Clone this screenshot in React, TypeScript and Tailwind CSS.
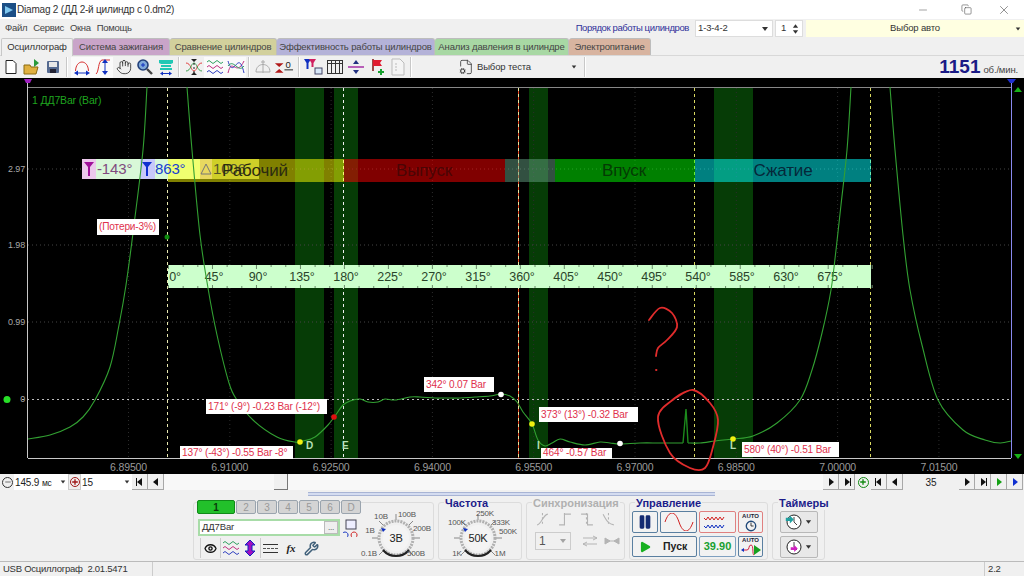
import React from 'react';
import { Hand, Minus, X, Copy, Pause, Play, Eye, Wrench, FileCog, Plus } from 'lucide-react';

// smooth path through measured points
const smooth = (pts: number[][]): string => {
  let d = `M${pts[0][0]} ${pts[0][1]}`;
  for (let i = 0; i < pts.length - 1; i++) {
    const p0 = pts[Math.max(i - 1, 0)];
    const p1 = pts[i];
    const p2 = pts[i + 1];
    const p3 = pts[Math.min(i + 2, pts.length - 1)];
    const k = 6;
    d += ` C${(p1[0] + (p2[0] - p0[0]) / k).toFixed(1)} ${(p1[1] + (p2[1] - p0[1]) / k).toFixed(1)} ${(p2[0] - (p3[0] - p1[0]) / k).toFixed(1)} ${(p2[1] - (p3[1] - p1[1]) / k).toFixed(1)} ${p2[0]} ${p2[1]}`;
  }
  return d;
};

const curveA = [[28, 439], [50, 435], [70, 427], [83, 417], [95, 400], [110, 367], [119, 325], [126, 285], [134, 225], [143, 150], [147, 87]];
const curveB = [[187, 87], [192, 150], [200, 235], [208, 288], [217, 335], [229, 383], [237, 400], [253, 420], [277, 437], [295, 442], [303, 441], [315, 437], [328, 425], [335, 416], [343, 405], [350, 401], [360, 399], [368, 402], [378, 402], [385, 399], [395, 400], [410, 397], [420, 397], [435, 398], [445, 398], [460, 398], [475, 397], [490, 396], [501, 394], [510, 396], [517, 402], [523, 412], [532, 424], [538, 440], [545, 446], [552, 443], [560, 439], [570, 442], [585, 445], [600, 442], [610, 443], [620, 444], [640, 443], [660, 443], [683, 443]];
const curveC = [[688, 443], [700, 443], [715, 441], [733, 439], [753, 436], [777, 423], [800, 400], [812, 370], [822, 333], [831, 290], [836, 250], [841, 205], [847, 150], [851, 87]];
const curveD = [[890, 87], [895, 150], [903, 235], [910, 290], [922, 345], [938, 400], [963, 430], [985, 440], [1000, 443], [1011, 441]];

const redLabels = [
  { x: 97, y: 219, w: 62, h: 16, t: '(Потери-3%)' },
  { x: 206, y: 399, w: 121, h: 15, t: '171° (-9°) -0.23 Bar (-12°)' },
  { x: 180, y: 446, w: 113, h: 13, t: '137° (-43°) -0.55 Bar -8°' },
  { x: 424, y: 377, w: 70, h: 15, t: '342° 0.07 Bar' },
  { x: 539, y: 407, w: 99, h: 15, t: '373° (13°) -0.32 Bar' },
  { x: 541, y: 448, w: 71, h: 11, t: '464° -0.57 Bar' },
  { x: 742, y: 442, w: 97, h: 15, t: '580° (40°) -0.51 Bar' },
];

const xLabels = ['6.89500', '6.91000', '6.92500', '6.94000', '6.95500', '6.97000', '6.98500', '7.00000', '7.01500'];
const degrees = [0, 45, 90, 135, 180, 225, 270, 315, 360, 405, 450, 495, 540, 585, 630, 675];

const Chart = () => (
  <svg viewBox="0 78 1024 396" className="block w-[1024px] h-[396px] bg-black shrink-0">
    {/* valve timing bands */}
    {[[295, 29], [334, 24], [529, 19], [714, 39]].map(([x, w]) => (
      <rect key={x} x={x} y={88} width={w} height={370} fill="#063c06" />
    ))}
    {/* grid */}
    {[169, 245, 322].map(y => (
      <line key={y} x1={28} x2={1011} y1={y} y2={y} stroke="#444" strokeDasharray="1 3" />
    ))}
    <line x1={22} x2={1011} y1={399.5} y2={399.5} stroke="#bbb" strokeDasharray="2 3" />
    {xLabels.map((_, i) => (
      <line key={i} x1={128.5 + i * 101.3} x2={128.5 + i * 101.3} y1={88} y2={458} stroke="#2c2c2c" strokeDasharray="1 3" />
    ))}
    {[[167.5, '#e8e8b0'], [343.5, '#f0f0f0'], [694.5, '#d8d860'], [870.5, '#d8d860']].map(([x, c]) => (
      <line key={x as number} x1={x as number} x2={x as number} y1={88} y2={458} stroke={c as string} strokeDasharray="3 3" />
    ))}
    <line x1={518.5} x2={518.5} y1={88} y2={458} stroke="#e04020" />
    <line x1={518.5} x2={518.5} y1={88} y2={458} stroke="#e8e8a0" strokeDasharray="3 3" />
    {/* stroke bands */}
    <rect x={168} y={159} width={176} height={23} fill="#ffff00" fillOpacity={0.5} />
    <rect x={344} y={159} width={161} height={23} fill="#ff0000" fillOpacity={0.5} />
    <rect x={505} y={159} width={50} height={23} fill="#64a082" fillOpacity={0.5} />
    <rect x={555} y={159} width={140} height={23} fill="#00ff00" fillOpacity={0.5} />
    <rect x={695} y={159} width={176} height={23} fill="#00ffff" fillOpacity={0.5} />
    <g fontSize={17} textAnchor="middle">
      <text x={424} y={176} fill="#4a0505">Выпуск</text>
      <text x={624} y={176} fill="#043a04">Впуск</text>
      <text x={783} y={176} fill="#05283a">Сжатие</text>
    </g>
    {/* cursor readout */}
    <rect x={82} y={159} width={14} height={20} fill="#ecc8ec" />
    <rect x={96} y={159} width={44} height={20} fill="#d8f8d8" />
    <rect x={140} y={159} width={15} height={20} fill="#c8c8fa" />
    <rect x={155} y={159} width={13} height={20} fill="#d8f8d8" />
    <rect x={168} y={159} width={32} height={20} fill="#f0ff70" />
    <rect x={200} y={159} width={12} height={20} fill="#e8d860" />
    <rect x={212} y={159} width={47} height={20} fill="#cfcf28" />
    <path d="M84 162h10l-4 5v9h-2v-9z" fill="#a0109a" />
    <path d="M142 162h10l-4 5v9h-2v-9z" fill="#1030d0" />
    <path d="M206 164l-5 10h10z" fill="none" stroke="#777" />
    <g fontSize={15}>
      <text x={97} y={174} fill="#804a80">-143°</text>
      <text x={155} y={174} fill="#1a40d0">863°</text>
      <text x={213} y={174} fill="#55552a">1006</text>
    </g>
    <text x={255} y={176} fontSize={17} textAnchor="middle" fill="#2b2b10">Рабочий</text>
    {/* degree ruler */}
    <rect x={168} y={265} width={703} height={23} fill="#ccffcc" />
    {Array.from({ length: 49 }).map((_, i) => {
      const x = 168.5 + i * 14.66;
      const big = i % 3 === 0;
      return (
        <g key={i} stroke="#6a8a6a">
          <line x1={x} x2={x} y1={265} y2={big ? 269 : 267} />
          <line x1={x} x2={x} y1={288} y2={big ? 285 : 286} />
        </g>
      );
    })}
    {degrees.map((d, i) => (
      <text key={d} x={i === 0 ? 175 : 170 + i * 44} y={281} fontSize={12.5} fill="#2a442a" textAnchor="middle">{d}°</text>
    ))}
    {/* axes */}
    <line x1={28} x2={1011} y1={87.5} y2={87.5} stroke="#888" />
    <line x1={27.5} x2={27.5} y1={80} y2={458} stroke="#c8c8c8" />
    <line x1={28} x2={1011} y1={458.5} y2={458.5} stroke="#c8c8c8" />
    <line x1={1011.5} x2={1011.5} y1={80} y2={458} stroke="#8a8af0" />
    <path d="M24 79h8l-2 4h-4z" fill="#a020c0" />
    <path d="M1007 79h9l-3 4h-3z" fill="#2030d0" />
    <path d="M1018 87l4 5h-8z" fill="#18b018" />
    <path d="M1014 454h8l-4 5z" fill="#18b018" />
    <circle cx={7} cy={399.5} r={3.5} fill="#28e028" />
    {/* pressure trace */}
    <g fill="none" stroke="#32a032" strokeWidth={1.1}>
      <path d={smooth(curveA)} />
      <path d={smooth(curveB)} />
      <path d={smooth(curveC)} />
      <path d={smooth(curveD)} />
      <path d="M683 443L686 409L688 443" stroke="#1c8a1c" strokeWidth={1.4} />
    </g>
    <g fontSize={9} fill="#a8a8a8" textAnchor="end">
      <text x={25} y={172}>2.97</text>
      <text x={25} y={248}>1.98</text>
      <text x={25} y={325}>0.99</text>
      <text x={25} y={402}>0</text>
    </g>
    <text x={32} y={104} fontSize={10.5} fill="#1fa51f">1 ДД7Bar (Bar)</text>
    {xLabels.map((t, i) => (
      <text key={t} x={128.5 + i * 101.3} y={471} fontSize={10.5} fill="#9a9a9a" textAnchor="middle">{t}</text>
    ))}
    {/* measured points */}
    {redLabels.map(l => (
      <g key={l.t}>
        <rect x={l.x} y={l.y} width={l.w} height={l.h} fill="#fff" />
        <text x={l.x + 2} y={l.y + Math.min(l.h - 3, 11)} fontSize={10.1} fill="#e0304c">{l.t}</text>
      </g>
    ))}
    <circle cx={167} cy={237} r={2.5} fill="#0e8a0e" />
    {[[300, 442, '#f0f010'], [334, 417, '#e01010'], [501, 394.5, '#ffffff'], [532, 424, '#f0f010'], [620, 443.5, '#ffffff'], [733, 439, '#f0f010']].map(([x, y, c]) => (
      <circle key={x as number} cx={x as number} cy={y as number} r={2.8} fill={c as string} />
    ))}
    <g fontSize={10} fill="#b8e0b8" fontWeight={700}>
      <text x={306} y={449}>D</text>
      <text x={342} y={449}>E</text>
      <text x={537} y={449}>I</text>
      <text x={730} y={449}>L</text>
    </g>
    {/* hand drawn note */}
    <g fill="none" stroke="#e02c2c" strokeWidth={1.8} strokeLinecap="round">
      <path d={smooth([[649, 320], [660, 308], [672, 313], [677, 327], [667, 340], [658, 348], [656, 356]])} />
      <path d="M656 370h.5" />
      <path d={smooth([[675, 398], [693, 390], [710, 403], [718, 420], [713, 447], [705, 468], [690, 468], [670, 453], [658, 417], [675, 398], [685, 392]])} />
    </g>
  </svg>
);

const Doc = () => (
  <svg viewBox="0 0 16 16" className="w-4 h-4"><path d="M3 1.500h7l3 3v10H3z" fill="#fff" stroke="#222" /></svg>
);
const Folder = () => (
  <svg viewBox="0 0 18 18" className="w-[18px] h-[18px]"><path d="M1 7h6l1 2h7l-2 7H1z" fill="#e0b040" stroke="#8a6a10" /><path d="M11 1l5 4-5 4z" fill="#2a9a3a" /></svg>
);
const Save = () => (
  <svg viewBox="0 0 16 16" className="w-4 h-4"><rect x="2" y="2" width="12" height="12" rx="1" fill="#556a90" /><rect x="4" y="3" width="8" height="5" fill="#e8e8e8" /><rect x="5" y="10" width="6" height="4" fill="#223" /></svg>
);
const ArcIcon = () => (
  <svg viewBox="0 0 18 18" className="w-[18px] h-[18px]" fill="none"><path d="M2.500 13C3 1 15 1 15.500 13" stroke="#d83030" /><path d="M3 15h12" stroke="#1030c0" /><path d="M1 15l4-2.500v5zM17 15l-4-2.500v5z" fill="#1030c0" /></svg>
);
const PeakIcon = () => (
  <svg viewBox="0 0 18 18" className="w-[18px] h-[18px]" fill="none"><path d="M2 16C5 14 4 3 8 2h8" stroke="#d83030" /><path d="M11 3v12" stroke="#1030c0" /><path d="M8 5l3-4 3 4zM8 13l3 4 3-4z" fill="#1030c0" /></svg>
);
const SearchIcon = () => (
  <svg viewBox="0 0 18 18" className="w-[18px] h-[18px]" fill="none"><circle cx="7" cy="7" r="5" fill="#7fa8d8" stroke="#23407a" strokeWidth="1.6" /><path d="M5 7h4M7 5v4" stroke="#1030c0" /><path d="M11 11l5 5" stroke="#444" strokeWidth="2.4" /></svg>
);
const TealIcon = () => (
  <svg viewBox="0 0 18 18" className="w-[18px] h-[18px]"><path d="M2 2h14v3l-2 1H4L2 5zM4 7h10v2H4zM3 10h12v2H3z" fill="#20c8b4" /><path d="M5 15.500h8" stroke="#1030c0" /><path d="M3 15.500l3-2v4zM15 15.500l-3-2v4z" fill="#1030c0" /></svg>
);
const CrossIcon = () => (
  <svg viewBox="0 0 18 18" className="w-[18px] h-[18px]" fill="none"><path d="M1 5c5 0 5 8 8 8s3-8 8-8" stroke="#e04040" /><path d="M1 13c5 0 5-8 8-8s3 8 8 8" stroke="#40a050" /><path d="M9 1v16" stroke="#222" strokeDasharray="2 2" /><path d="M6 1h6l-3 3zM6 17h6l-3-3z" fill="#222" /></svg>
);
const WavesIcon = () => (
  <svg viewBox="0 0 18 18" className="w-[18px] h-[18px]" fill="none"><path d="M1 4q2-3 4 0t4 0 4 0 4 0" stroke="#30a060" /><path d="M1 9q2-3 4 0t4 0 4 0 4 0" stroke="#c03080" /><path d="M1 14q2-3 4 0t4 0 4 0 4 0" stroke="#3040c0" /></svg>
);
const LoopsIcon = () => (
  <svg viewBox="0 0 18 18" className="w-[18px] h-[18px]" fill="none"><path d="M1 15C5-2 9 20 17 3" stroke="#c03080" /><path d="M1 3c6 20 10-14 16 12" stroke="#3040c0" /><path d="M1 8c6-8 10 8 16 0" stroke="#30a060" /></svg>
);
const GrayGauge = () => (
  <svg viewBox="0 0 18 18" className="w-[18px] h-[18px]" fill="none" stroke="#aaa"><path d="M2 14C2 4 16 4 16 14z" /><path d="M9 2v13M7 4h4" /></svg>
);
const ZeroIcon = () => (
  <svg viewBox="0 0 22 18" className="w-[22px] h-[18px]"><path d="M2 5h9l-4.500 4zM2 15h9l-4.500-4z" fill="#b01818" /><text x="13" y="10" fontSize="10" fill="#222">0</text><path d="M12 12h9" stroke="#222" /></svg>
);
const FilterIcon = () => (
  <svg viewBox="0 0 20 18" className="w-5 h-[18px]"><path d="M1 1h7l-2.500 4v6h-2V5z" fill="#1030c0" /><path d="M6 1h7l-2.500 4v4h-2V5z" fill="#d02060" /><rect x="12" y="10" width="7" height="6" fill="#d8e8f8" stroke="#446" /></svg>
);
const TableIcon = () => (
  <svg viewBox="0 0 18 16" className="w-[18px] h-4" fill="none" stroke="#333"><rect x="1.500" y="1.500" width="15" height="13" /><path d="M1.500 4.500h15M5.500 2v12M9.500 2v12M13.500 2v12" /></svg>
);
const SplitIcon = () => (
  <svg viewBox="0 0 18 16" className="w-[18px] h-4"><path d="M1 8h16" stroke="#a020a0" strokeWidth="1.4" /><path d="M6 5h6L9 1zM6 11h6l-3 4z" fill="#223080" /></svg>
);
const FlagIcon = () => (
  <svg viewBox="0 0 16 18" className="w-4 h-[18px]"><path d="M4 1v12" stroke="#801010" strokeWidth="1.500" /><path d="M4 2h9l-2 3 2 3H4z" fill="#e01c30" /><path d="M9 14h6M12 11v6" stroke="#18a030" strokeWidth="2" /></svg>
);
const SheetIcon = () => (
  <svg viewBox="0 0 16 18" className="w-4 h-[18px]" fill="#f4f4f4" stroke="#bbb"><path d="M2 1h8l4 4v12H2z" /><path d="M5 6h2M5 9h2M5 12h2" /></svg>
);

const ToolBtn = ({ active, children }: { active?: boolean; children: React.ReactNode }) => (
  <div className={`w-[21px] h-[21px] flex items-center justify-center ${active ? 'bg-[#fafafa]' : ''}`}>{children}</div>
);
const Sep = () => <div className="w-[2px] h-5 mx-[2px] border-l border-[#c8c8c8] bg-white" />;

const tabs = [
  { t: 'Система зажигания', w: 'w-[97px]', c: 'bg-[#c9a4c9]' },
  { t: 'Сравнение цилиндров', w: 'w-[107px]', c: 'bg-[#d2d09c]' },
  { t: 'Эффективность работы цилиндров', w: 'w-[158px]', c: 'bg-[#b4b2d8]' },
  { t: 'Анализ давления в цилиндре', w: 'w-[134px]', c: 'bg-[#a8d8a4]' },
  { t: 'Электропитание', w: 'w-[82px]', c: 'bg-[#d8b4a0]' },
];

// dial with value labels, drawn
const Knob = ({ value, labels }: { value: string; labels: [string, number, number][] }) => (
  <svg viewBox="0 0 84 58" className="w-[84px] h-[58px]">
    {Array.from({ length: 7 }).map((_, i) => {
      const a = ((135 + i * 45) * Math.PI) / 180;
      return <line key={i} x1={42 + 18 * Math.cos(a)} y1={35 + 18 * Math.sin(a)} x2={42 + 24 * Math.cos(a)} y2={35 + 24 * Math.sin(a)} stroke="#888" />;
    })}
    <circle cx="42" cy="35" r="17" fill="#f0f0f0" stroke="#b0b0b0" strokeWidth="3" strokeDasharray="2 1" />
    <path d="M29 47a17 17 0 0 0 26 0" fill="none" stroke="#222" strokeWidth="2" />
    <circle cx="42" cy="35" r="13" fill="#f4f4f4" />
    <path d="M27 25l5 1-3 3z" fill="#1030c0" />
    <text x="42" y="39" fontSize="11" textAnchor="middle" fill="#222">{value}</text>
    {labels.map(([t, x, y]) => (
      <text key={t} x={x} y={y} fontSize="8" textAnchor="middle" fill="#555">{t}</text>
    ))}
  </svg>
);

const Group = ({ title, muted, className, children }: { title: string; muted?: boolean; className: string; children: React.ReactNode }) => (
  <div className={`relative h-[58px] border border-[#dcdcdc] rounded-[3px] ${className}`}>
    <div className={`absolute left-[5px] -top-[6px] bg-[#f0f0f0] px-[1px] text-[11px] leading-[13px] tracking-normal font-bold ${muted ? 'text-[#b0b0b0]' : 'text-[#1c1c8a]'}`}>{title}</div>
    {children}
  </div>
);

const NavBtn = ({ children }: { children: React.ReactNode }) => (
  <div className="w-4 h-[16px] flex items-center justify-center border-r border-b border-[#a8a8a8] bg-[#f0f0f0] text-[7px] text-black">{children}</div>
);
const Tri = ({ left, bar, color = '#111' }: { left?: boolean; bar?: boolean; color?: string }) => (
  <svg viewBox="0 0 10 8" className="w-[10px] h-2">
    {left ? <path d="M7 0v8L2 4z" fill={color} /> : <path d="M3 0v8l5-4z" fill={color} />}
    {bar && <path d={left ? 'M1.500 0v8' : 'M8.500 0v8'} stroke={color} />}
  </svg>
);
const Drop = ({ className = '' }: { className?: string }) => (
  <svg viewBox="0 0 8 4" className={`w-2 h-1 ${className}`}><path d="M1 0h6L4 4z" fill="#333" /></svg>
);

const SideBtn = ({ className, children }: { className: string; children: React.ReactNode }) => (
  <div className={`flex items-center justify-center rounded-[2px] border bg-[#f2f2f2] ${className}`}>{children}</div>
);

const App: React.FC = () => {
  return (
    <div className="w-[1024px] h-[576px] flex flex-col overflow-hidden bg-[#f0f0f0] font-['Liberation_Sans',Arial,sans-serif] text-[9.5px] tracking-[-0.15px] text-[#333]">
      {/* title bar */}
      <div className="h-[19px] bg-white flex items-center pl-[2px]">
        <svg viewBox="0 0 14 14" className="w-[14px] h-[14px] mr-[1px]"><rect width="14" height="14" fill="#1c4f86" /><path d="M3 3l8 4-8 4z" fill="#7fc8f0" /></svg>
        <span className="text-[10px] tracking-[-0.2px] text-[#333]">Diamag 2 (ДД 2-й цилиндр с 0.dm2)</span>
        <div className="ml-auto flex items-center text-[#444]">
          <Minus className="w-3 h-3 mr-[32px]" strokeWidth={1} />
          <Copy className="w-[11px] h-[11px] mr-[25px]" strokeWidth={1.2} />
          <X className="w-[14px] h-[14px] mr-[13px]" strokeWidth={1} />
        </div>
      </div>
      {/* menu */}
      <div className="h-[19px] flex items-center">
        <div className="flex pl-[5px] gap-[6px] text-[9.5px] tracking-[-0.3px] text-[#444]">
          <span>Файл</span><span>Сервис</span><span>Окна</span><span>Помощь</span>
        </div>
        <span className="ml-auto tracking-[-0.4px] text-[#30309a] mr-[6px]">Порядок работы цилиндров</span>
        <div className="w-[78px] h-[17px] bg-white border border-[#ddd] flex items-center justify-between px-[2px] mr-[2px]">
          <span>1-3-4-2</span><Drop className="mr-[1px]" />
        </div>
        <div className="w-[28px] h-[17px] bg-white border border-[#ddd] flex items-center justify-between pl-[5px] pr-[3px] mr-[3px]">
          <span>1</span>
          <div className="flex flex-col gap-[2px]">
            <svg viewBox="0 0 8 4" className="w-[7px] h-1"><path d="M1 4h6L4 0z" fill="#333" /></svg>
            <Drop className="w-[7px]" />
          </div>
        </div>
        <div className="w-[218px] h-[17px] bg-[#ffffe1] flex items-center justify-center relative">
          <span className="text-[#333]">Выбор авто</span>
          <Drop className="absolute right-[3px] w-[6px]" />
        </div>
      </div>
      {/* tabs */}
      <div className="h-[18px] flex items-end pl-[1px] border-b border-[#d8d8d8]">
        <div className="w-[72px] h-[18px] -mb-px bg-[#f0f0f0] border border-b-0 border-[#c8c8c8] rounded-t-[2px] flex items-center justify-center text-[#333]">Осциллограф</div>
        {tabs.map(t => (
          <div key={t.t} className={`${t.w} h-[17px] ${t.c} border-r border-t border-[#bdbdbd] rounded-t-[3px] flex items-center justify-center text-[#444] whitespace-nowrap`}>{t.t}</div>
        ))}
      </div>
      {/* toolbar */}
      <div className="h-[22px] flex items-center">
        <ToolBtn><Doc /></ToolBtn>
        <ToolBtn><Folder /></ToolBtn>
        <ToolBtn><Save /></ToolBtn>
        <div className="w-[1px]" />
        <Sep />
        <div className="w-[1px]" />
        <ToolBtn active><ArcIcon /></ToolBtn>
        <ToolBtn active><PeakIcon /></ToolBtn>
        <ToolBtn><Hand className="w-4 h-4 text-[#333]" strokeWidth={1.3} /></ToolBtn>
        <ToolBtn><SearchIcon /></ToolBtn>
        <ToolBtn><TealIcon /></ToolBtn>
        <Sep />
        <div className="w-[1px]" />
        <ToolBtn><CrossIcon /></ToolBtn>
        <ToolBtn active><WavesIcon /></ToolBtn>
        <ToolBtn active><LoopsIcon /></ToolBtn>
        <Sep />
        <ToolBtn><GrayGauge /></ToolBtn>
        <ToolBtn><ZeroIcon /></ToolBtn>
        <div className="w-[2px]" />
        <Sep />
        <ToolBtn><FilterIcon /></ToolBtn>
        <div className="w-[1px]" />
        <ToolBtn><TableIcon /></ToolBtn>
        <ToolBtn><SplitIcon /></ToolBtn>
        <ToolBtn><FlagIcon /></ToolBtn>
        <ToolBtn><SheetIcon /></ToolBtn>
        <Sep />
        <div className="w-[124px] flex items-center ml-[44px]">
          <FileCog className="w-4 h-4 text-[#333] mr-[3px] shrink-0" strokeWidth={1.2} />
          <span className="whitespace-nowrap">Выбор теста</span>
          <Drop className="ml-auto w-[6px] shrink-0 mr-[5px]" />
        </div>
        <Sep />
        <div className="ml-auto flex items-baseline mr-[6px]">
          <span className="text-[19px] leading-[21px] tracking-normal font-bold text-[#1a1a86]">1151</span>
          <span className="text-[9.5px] ml-[3px] text-[#444]">об./мин.</span>
        </div>
      </div>
      <Chart />
      {/* scroll row */}
      <div className="h-[18px] flex items-start shrink-0">
        <div className="w-[13px] h-4 ml-[1px] flex items-center justify-center">
          <div className="w-[11px] h-[11px] rounded-full border border-[#333] flex items-center justify-center"><Minus className="w-2 h-2" /></div>
        </div>
        <div className="w-[54px] h-4 bg-white flex items-center justify-between px-[1px]">
          <span className="text-[10px] text-[#222] whitespace-nowrap">145.9 <span className="text-[8.5px]">мс</span></span><Drop className="w-[6px] mr-[1px]" />
        </div>
        <div className="w-[13px] h-4 flex items-center justify-center border border-[#ccc]">
          <div className="w-[10px] h-[10px] rounded-full border border-[#a01818] flex items-center justify-center"><Plus className="w-2 h-2 text-[#a01818]" strokeWidth={4} /></div>
        </div>
        <div className="w-[51px] h-4 bg-white flex items-center justify-between px-[1px]">
          <span className="text-[10px] text-[#222]">15</span><Drop className="w-[6px] mr-[1px]" />
        </div>
        <NavBtn><Tri left bar /></NavBtn>
        <NavBtn><Tri left /></NavBtn>
        <div className="w-[110px] h-4 bg-[#f8f8f8]" />
        <div className="w-[14px] h-4 bg-[#f0f0f0] border-r border-b border-[#777]" />
        <div className="flex-1 h-4 bg-[#f8f8f8]" />
        <NavBtn><Tri /></NavBtn>
        <NavBtn><Tri bar /></NavBtn>
        <div className="w-[16px] h-4 flex items-center justify-center">
          <div className="w-[11px] h-[11px] rounded-full border border-[#128a12] flex items-center justify-center"><Plus className="w-2 h-2 text-[#128a12]" strokeWidth={4} /></div>
        </div>
        <NavBtn><Tri left bar /></NavBtn>
        <NavBtn><Tri left /></NavBtn>
        <div className="w-[56px] h-4 bg-[#f0f0f0] flex items-center justify-center text-[10px] text-[#222]">35</div>
        <NavBtn><Tri /></NavBtn>
        <NavBtn><Tri bar /></NavBtn>
        <NavBtn><Tri color="#14a014" /></NavBtn>
        <NavBtn><Tri color="#1030d0" /></NavBtn>
        <div className="w-[1px]" />
      </div>
      {/* panel */}
      <div className="h-[69px] shrink-0 relative">
        <div className="absolute left-[308px] top-0 w-[407px] h-[4px] bg-[#d4dcf0] border-y border-[#a8b4d4]" />
        <div className="flex items-start gap-[4px] pl-[193px] pt-[10px]">
          {/* channel */}
          <div className="relative w-[241px] h-[58px] border border-[#dcdcdc] rounded-[3px]">
            <div className="absolute left-[3px] -top-[3px] flex gap-[1px]">
              <div className="w-[38px] h-[14px] rounded-[2px] bg-[#22c02a] border border-[#108a18] flex items-center justify-center text-[10px] text-[#0a3a0a] font-bold">1</div>
              {['2', '3', '4', '5', '6', 'D'].map(n => (
                <div key={n} className="w-[20px] h-[14px] rounded-[2px] bg-[#d4d4d4] border border-[#9aa4ae] flex items-center justify-center text-[10px] text-[#999]">{n}</div>
              ))}
            </div>
            <div className="absolute left-[4px] top-[16px] w-[142px] h-[17px] bg-white border-2 border-[#a8dca8] flex items-center pl-[2px] text-[#333]">
              ДД7Bar
              <div className="ml-auto w-[14px] h-[13px] bg-[#eee] border border-[#bbb] flex items-center justify-center text-[8px] leading-none">...</div>
            </div>
            <svg viewBox="0 0 18 18" className="absolute left-[149px] top-[16px] w-[18px] h-[18px]" fill="none"><rect x="3" y="1" width="10" height="9" stroke="#445" fill="#eef" /><path d="M2 13a3 3 0 1 0 .1 0" stroke="#1030c0" /><path d="M11 13a3 3 0 1 0 .1 0" stroke="#d02020" /></svg>
            <div className="absolute left-[6px] top-[35px] flex items-center h-[20px]">
              <div className="w-[20px] flex justify-center border-l border-[#ccc] h-full items-center"><Eye className="w-[13px] h-[13px] text-[#111]" strokeWidth={2.5} /></div>
              <div className="w-[20px] flex justify-center border-l border-[#ccc] h-full items-center"><WavesIcon /></div>
              <div className="w-[20px] flex justify-center h-full items-center">
                <svg viewBox="0 0 14 18" className="w-[14px] h-[18px]"><path d="M7 1L2 6h3v6H2l5 5 5-5H9V6h3z" fill="#a010c0" stroke="#1020c0" /></svg>
              </div>
              <div className="w-[20px] flex flex-col gap-[3px] items-center justify-center border-l border-[#ccc] h-full">
                <div className="w-[15px] h-px bg-[#333]" />
                <div className="w-[15px] h-px border-t border-dashed border-[#555]" />
                <div className="w-[15px] h-px bg-[#333]" />
              </div>
              <div className="w-[22px] text-center italic font-bold font-['Liberation_Serif',serif] text-[11px] text-[#222]">fx</div>
              <div className="w-[18px] flex justify-center"><Wrench className="w-[15px] h-[15px] text-[#40607a]" strokeWidth={2.4} /></div>
            </div>
            <div className="absolute -right-[5px] top-0">
              <Knob value="3B" labels={[['10B', 27, 16], ['100B', 53, 14], ['1B', 16, 30], ['200B', 68, 28], ['0.1B', 15, 53], ['500B', 62, 53]]} />
            </div>
          </div>
          {/* frequency */}
          <Group title="Частота" className="w-[84px]">
            <div className="absolute -left-[3px] top-0">
              <Knob value="50K" labels={[['250K', 49, 13], ['100K', 21, 22], ['333K', 65, 22], ['500K', 72, 31], ['1K', 21, 53], ['1M', 64, 53]]} />
            </div>
          </Group>
          {/* sync */}
          <Group title="Синхронизация" muted className="w-[99px]">
            <div className="flex flex-col pl-[8px] pt-[9px] gap-[5px]">
              <div className="flex gap-[6px] text-[#b8b8b8]">
                {['M1 12c4 0 5-9 10-10', 'M1 12h5V2h6', 'M1 2h6v10h5', 'M1 2c4 8 6 9 10 10'].map(d => (
                  <svg key={d} viewBox="0 0 13 14" className="w-[16px] h-[15px]" fill="none" stroke="#b4b4b4"><path d={d} /><path d="M6 1v12" strokeDasharray="2 2" /></svg>
                ))}
              </div>
              <div className="flex items-center">
                <div className="w-[36px] h-[18px] border border-[#ccc] flex items-center justify-between px-[3px] text-[12px] text-[#555]">1<Drop className="opacity-40" /></div>
                <svg viewBox="0 0 16 12" className="w-4 h-3 ml-[11px]" fill="none" stroke="#b4b4b4"><path d="M1 3h14M1 9h14M11 1l4 2-4 2M5 7L1 9l4 2" /></svg>
                <svg viewBox="0 0 16 12" className="w-4 h-3 ml-[6px]" fill="#b4b4b4" stroke="#b4b4b4"><path d="M1 6h14M1 3l5 3-5 3zM15 3l-5 3 5 3z" /></svg>
              </div>
            </div>
          </Group>
          {/* control */}
          <Group title="Управление" className="w-[139px]">
            <div className="grid grid-cols-[26px_37px_37px_25px] gap-x-[2px] gap-y-[3px] pl-[2px] pt-[8px]">
              <SideBtn className="h-[22px] border-[#5a7fa0]"><Pause className="w-4 h-4 text-[#142a72]" fill="#142a72" /></SideBtn>
              <SideBtn className="h-[22px] border-[#5a7fa0]">
                <svg viewBox="0 0 30 18" className="w-[30px] h-[18px]"><path d="M1 9C5-3 11-3 15 9s10 12 14 0" fill="none" stroke="#d02020" /></svg>
              </SideBtn>
              <SideBtn className="h-[22px] border-[#e08080]">
                <svg viewBox="0 0 32 18" className="w-[32px] h-[18px]" fill="none"><path d="M2 5l2 2 2-3 2 3 2-3 2 3 2-3 2 3 2-3 2 3 2-3" stroke="#d02020" /><path d="M2 13l2 2 2-3 2 3 2-3 2 3 2-3 2 3 2-3 2 3 2-3" stroke="#1030c0" /></svg>
              </SideBtn>
              <SideBtn className="h-[22px] border-[#e08080] flex-col">
                <span className="text-[6px] leading-[7px] tracking-normal font-bold text-[#223]">AUTO</span>
                <svg viewBox="0 0 14 14" className="w-3 h-3" fill="none"><circle cx="7" cy="7" r="5.500" stroke="#224a7a" strokeWidth="1.600" /><path d="M7 3v4h3" stroke="#222" /></svg>
              </SideBtn>
              <SideBtn className="col-span-2 h-[21px] border-[#5a7fa0] justify-start pl-[5px] gap-[11px]">
                <Play className="w-[14px] h-[18px] text-[#18b020]" fill="#18b020" strokeWidth={0} />
                <span className="text-[10.5px] tracking-normal font-bold text-[#222]">Пуск</span>
              </SideBtn>
              <SideBtn className="h-[21px] border-[#7fa0c0]">
                <span className="text-[11px] tracking-normal font-bold text-[#18a030]">39.90</span>
              </SideBtn>
              <SideBtn className="h-[21px] border-[#5a7fa0] flex-col">
                <span className="text-[6px] leading-[7px] tracking-normal font-bold text-[#223]">AUTO</span>
                <svg viewBox="0 0 20 12" className="w-[20px] h-3"><path d="M3 6h3c3 0 1-5 4-5s1 10 3 10" fill="none" stroke="#d02040" /><path d="M0 6l3-2v4z" fill="#1030c0" /><path d="M13 1l7 5-7 5z" fill="#18a020" /></svg>
              </SideBtn>
            </div>
          </Group>
          {/* timers */}
          <Group title="Таймеры" className="w-[53px]">
            <div className="flex flex-col items-center gap-[3px] pt-[8px]">
              {['#20a0a0', '#d020c0'].map(c => (
                <div key={c} className="w-[38px] h-[22px] bg-[#e8e8e8] border border-[#b8b8b8] rounded-[2px] flex items-center justify-center gap-[2px]">
                  <svg viewBox="0 0 18 18" className="w-[18px] h-[18px]" fill="none"><circle cx="9" cy="9" r="7" stroke="#222" fill="#fff" /><path d="M9 4v5l3 3" stroke="#444" /><path d="M1 6h5V3l5 5-5 5v-3H1z" fill={c} transform={c === '#20a0a0' ? 'scale(.8)' : 'translate(5 5) scale(.7)'} /></svg>
                  <Drop className="w-[7px]" />
                </div>
              ))}
            </div>
          </Group>
        </div>
      </div>
      {/* status bar */}
      <div className="flex-1 flex items-stretch border-t border-[#bbb] min-h-0">
        <div className="w-[153px] flex items-center pl-[3px] border-r border-[#ccc] text-[#333] tracking-[-0.25px] text-[9.5px] whitespace-nowrap">USB Осциллограф&nbsp;&nbsp;2.01.5471</div>
        <div className="flex-1" />
        <div className="w-[40px] flex items-center pl-[3px] border-l border-[#ccc] text-[#333]">2.2</div>
      </div>
    </div>
  );
};

export default App;
